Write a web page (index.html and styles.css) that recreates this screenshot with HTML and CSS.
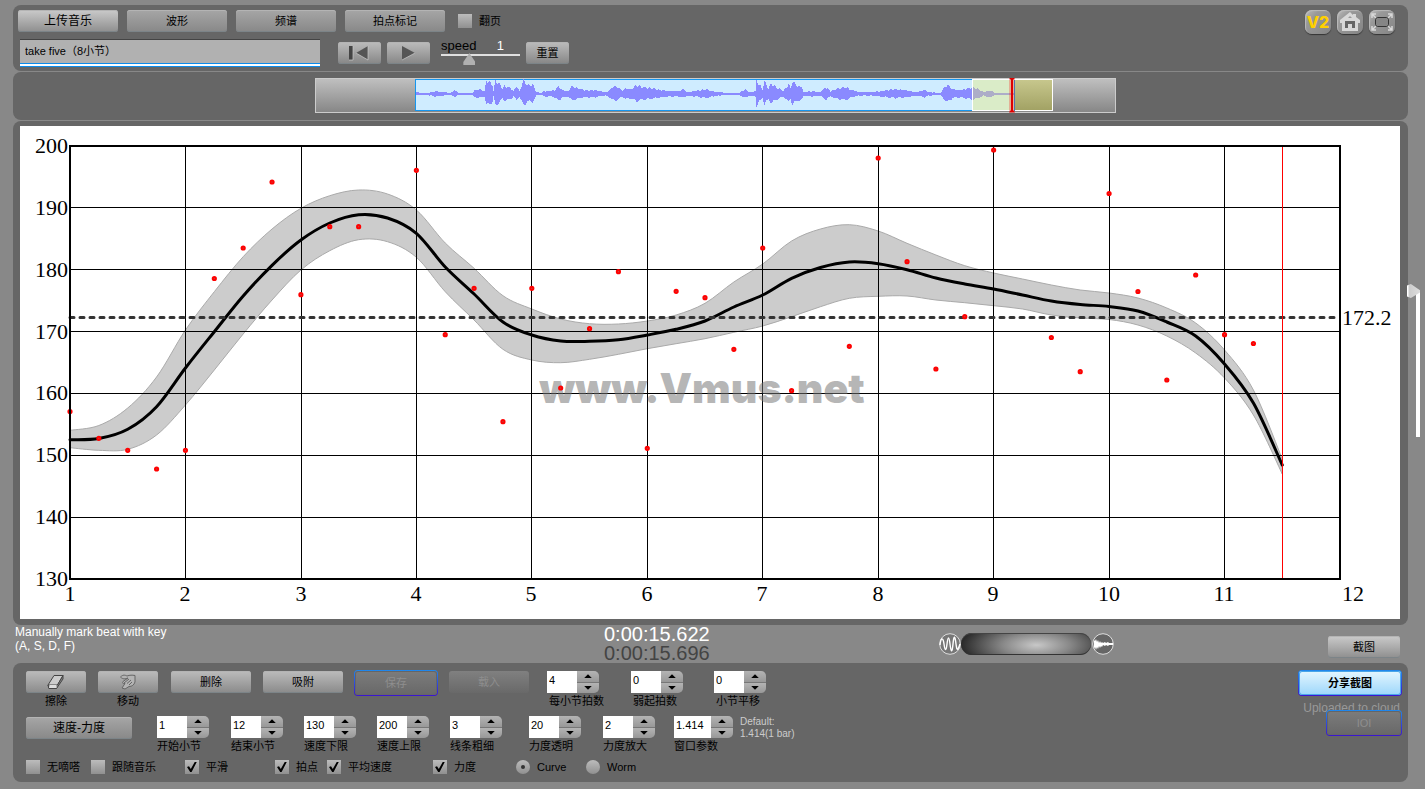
FILE: index.html
```html
<!DOCTYPE html>
<html lang="zh-CN">
<head>
<meta charset="utf-8">
<title>Vmus.net</title>
<link rel="stylesheet" href="styles.css">
</head>
<body>
<header class="panel header">
  <div class="header-main">
    <nav class="tabs">
      <button class="btn wide large bright">上传音乐</button>
      <button class="btn wide">波形</button>
      <button class="btn wide">频谱</button>
      <button class="btn wide">拍点标记</button>
      <label class="check"><input type="checkbox">翻页</label>
    </nav>
    <div class="transport">
      <input class="track-name" type="text" value="take five（8小节）" aria-label="Track">
      <div class="transport-buttons">
        <button class="btn play" aria-label="Rewind"><svg width="24" height="16" viewBox="0 0 24 16"><path d="M1 1h4v14h-4z" fill="#444"/><path d="M20 1v14L8 8z" fill="#555"/><path d="M5 1v14H1M20 1v14L8 8" fill="none" stroke="#ccc" stroke-width=".7"/></svg></button>
        <button class="btn play" aria-label="Play"><svg width="24" height="16" viewBox="0 0 24 16"><path d="M5 1v14l13-7z" fill="#555"/><path d="M5 15l13-7" stroke="#ccc" stroke-width=".7"/></svg></button>
      </div>
      <div class="speed">
        <div class="speed-head"><label for="speed">speed</label><output for="speed">1</output></div>
        <input id="speed" class="speed-range" type="range" min="0" max="3" step="0.1" value="1">
      </div>
      <button class="btn play">重置</button>
    </div>
  </div>
  <div class="header-icons">
    <button class="icon-btn v2">V2</button>
    <button class="icon-btn" aria-label="Home"><svg width="26" height="24" viewBox="0 0 26 24"><path d="M13 2L3 10v3h2v8h16v-8h2v-3l-4-3V4h-3v1z" fill="#d8d8d8"/><path d="M8 11h10v7h-3v-4h-4v4H8z" fill="#666"/><path d="M11 8l2-2 2 2z" fill="#999"/></svg></button>
    <button class="icon-btn" aria-label="Fullscreen"><svg width="26" height="24" viewBox="0 0 26 24"><rect x="6.500" y="7.500" width="13" height="9" rx="2" fill="#858585" stroke="#333"/><path d="M3 8V4h4M3 4l4 4M19 4h4v4M23 4l-4 4M3 16v4h4M3 20l4-4M19 20h4v-4M23 20l-4-4" fill="none" stroke="#d8d8d8" stroke-width="1.500"/></svg></button>
  </div>
</header>

<section class="panel overview">
  <svg class="overview-strip" viewBox="315 78 801 35" aria-label="Waveform">
    <defs>
      <linearGradient id="strip" x2="0" y2="1"><stop stop-color="#c0c0c0"/><stop offset="1" stop-color="#868686"/></linearGradient>
      <linearGradient id="olive" x2="0" y2="1"><stop stop-color="#c8c88e"/><stop offset="1" stop-color="#a1a163"/></linearGradient>
    </defs>
    <rect x="315.500" y="78.500" width="800" height="34" fill="url(#strip)" stroke="#ccc"/>
    <rect x="415.500" y="79.500" width="599" height="31" fill="#cfecff" stroke="#1796ee"/>
    <path id="wave" fill="#8a8aff"/>
    <rect x="973" y="80" width="41" height="30" fill="#eeee60" fill-opacity=".35"/>
    <rect x="1014" y="79" width="38" height="32" fill="url(#olive)"/>
    <rect x="972.500" y="79.500" width="80" height="31" fill="none" stroke="#fff"/>
    <path d="M1014.500 80v31" stroke="#1796ee"/>
    <path d="M1012 79v33" stroke="#f00" stroke-opacity=".25" stroke-width="6"/>
    <path d="M1012 78v34" stroke="#d00" stroke-width="2"/>
    <path d="M1009 78h6l-3 3zM1009 112.500h6l-3-4z" fill="#d00"/>
  </svg>
</section>

<section class="panel chart-panel">
  <svg class="chart" id="chart" viewBox="20 126 1380 493" role="img" aria-label="速度-力度">
    <path id="band" class="band"/>
    <g id="grid"></g>
    <path id="curve" class="curve"/>
    <path class="average" d="M70 317.500H1340"/>
    <text class="watermark" x="702" y="403" text-anchor="middle">www.Vmus.net</text>
    <g id="beats"></g>
    <path class="cursor" d="M1282.500 146V579"/>
    <rect class="frame" x="70" y="146" width="1270" height="433"/>
    <g id="labels"></g>
  </svg>
  <input class="zoom-range" type="range" value="0" aria-label="Zoom">
</section>

<section class="status">
  <p class="hint">Manually mark beat with key<br>(A, S, D, F)</p>
  <div class="clock"><div>0:00:15.622</div><div class="total">0:00:15.696</div></div>
  <div class="mixer">
    <svg width="22" height="22" viewBox="0 0 22 22"><circle cx="11" cy="11" r="10.300" fill="#777" stroke="#ddd"/><path d="M1 12C2 4 4 4 5 11s2 8 3 0 2-8 3 0 2 10 3 0 2-8 3 0 2 6 4 0" fill="none" stroke="#fff" stroke-width="1.400"/></svg>
    <div class="mixer-bar"></div>
    <svg class="mixer-wave" width="22" height="22" viewBox="0 0 22 22"><circle cx="11" cy="11" r="10.300" fill="#666" stroke="#ddd"/><path d="M2 7l1 1 1-2 1 3 1-2 1 3 1-2 1 2 1-1 1 1 2-1 1 1 2-1 1 1 4 0v2l-4 0-1 1-2-1-1 1-2-1-1 2-1-1-1 2-1-2-1 3-1-2-1 3-1-3-1 2z" fill="#fff"/></svg>
  </div>
  <button class="btn bright">截图</button>
</section>

<section class="panel controls">
  <div class="control-rows">
    <div class="row tools">
      <div class="tool"><button class="btn" id="erase" aria-label="擦除"><svg width="18" height="16" viewBox="0 0 18 16"><path d="M1 11L7 1.500h9L10.500 11l-1 3.500H2z" fill="#ccc" stroke="#444"/><path d="M1 11h9.500L16 1.500v3.500L9.500 14.500H2z" fill="#888" stroke="#444"/><path d="M2 14l.5-3h7l0 3z" fill="#ddd"/></svg></button><span>擦除</span></div>
      <div class="tool"><button class="btn" aria-label="移动"><svg width="18" height="16" viewBox="0 0 18 16"><path d="M1.500 3C4 .5 6 1 8 2c3-1 5-1 8-.5v6.500c-1 3-3 4.500-6 4.500l-4 2.500-3-1 3-4.500c-2 .5-3-.5-2-2L9 4C6 5 4 5.500 1.500 3z" fill="#b4b4b4" stroke="#666"/><path d="M5 9l5-4M8 9.500l4-3.500M10 11l3-3" fill="none" stroke="#666"/></svg></button><span>移动</span></div>
      <button class="btn medium">删除</button>
      <button class="btn medium">吸附</button>
      <button class="btn outlined faded save" disabled>保存</button>
      <button class="btn medium faded" disabled>载入</button>
      <div class="field" data-value="4">每小节拍数</div>
      <div class="field" data-value="0">弱起拍数</div>
      <div class="field" data-value="0">小节平移</div>
    </div>
    <div class="row params">
      <button class="btn large mode">速度-力度</button>
      <div class="field" data-value="1">开始小节</div>
      <div class="field" data-value="12">结束小节</div>
      <div class="field" data-value="130">速度下限</div>
      <div class="field" data-value="200">速度上限</div>
      <div class="field" data-value="3">线条粗细</div>
      <div class="field" data-value="20">力度透明</div>
      <div class="field" data-value="2">力度放大</div>
      <div class="field long" data-value="1.414">窗口参数</div>
      <p class="default">Default:<br>1.414(1 bar)</p>
    </div>
    <div class="row options">
      <label class="check"><input type="checkbox">无嘀嗒</label>
      <label class="check"><input type="checkbox">跟随音乐</label>
      <label class="check"><input type="checkbox" checked>平滑</label>
      <label class="check"><input type="checkbox" checked>拍点</label>
      <label class="check"><input type="checkbox" checked>平均速度</label>
      <label class="check"><input type="checkbox" checked>力度</label>
      <label class="check"><input type="radio" name="plot" checked>Curve</label>
      <label class="check"><input type="radio" name="plot">Worm</label>
    </div>
  </div>
  <div class="share">
    <button class="btn outlined primary">分享截图</button>
    <p class="uploaded">Uploaded to cloud</p>
    <button class="btn outlined faded ioi" disabled>IOI</button>
  </div>
</section>
<script src="app.js"></script>
</body>
</html>
```
FILE: styles.css
```css
* { box-sizing: border-box; }
body {
  margin: 0;
  padding: 5px 17px 7px 13px;
  background: #888;
  color: #000;
  font: 11px/13px "Liberation Sans", "Noto Sans CJK SC", sans-serif;
}
p { margin: 0; }
button, input { font: inherit; color: inherit; margin: 0; }

.panel { background: #666; border-radius: 8px; margin-bottom: 1px; }

.btn {
  display: inline-flex;
  align-items: center;
  justify-content: center;
  height: 22px;
  padding: 0;
  border: 0;
  border-radius: 3px;
  background: linear-gradient(#a6a6a6, #888);
  box-shadow: inset 0 1px #b4b4b4, inset 0 -1px #7c8488;
}
.btn.bright { background: linear-gradient(#cacaca, #8e8e8e); }
.btn.large { font-size: 12px; }
.btn.wide { width: 100px; }
.btn.medium { width: 80px; background: linear-gradient(#bcbcbc, #8a8a8a); }
.btn.play { width: 43px; background: linear-gradient(#bcbcbc, #868686); }
.btn.faded { color: #8e8e8e; background: linear-gradient(#808080, #696969); box-shadow: none; }
.btn.outlined {
  height: 26px;
  border: 1px solid transparent;
  border-radius: 4px;
  background: linear-gradient(#7c7c7c, #686868) padding-box, linear-gradient(#2089ec, #3c14d0) border-box;
  box-shadow: inset 0 0 0 1px #666;
}
.btn.primary {
  width: 104px;
  font-weight: bold;
  color: #000;
  background: linear-gradient(#e4f6ff, #9dd7fb) padding-box, linear-gradient(#2089ec, #3c14d0) border-box;
  box-shadow: inset 0 0 0 1px #4aa5e8;
}

.check { display: flex; align-items: center; gap: 7px; height: 14px; white-space: nowrap; }
.check input {
  appearance: none;
  flex: none;
  display: grid;
  place-items: center;
  width: 14px;
  height: 14px;
  background: linear-gradient(#bcbcbc, #909090);
}
.check input[type="radio"] { border-radius: 50%; }
.check input[type="checkbox"]:checked::before {
  content: "";
  width: 10px;
  height: 11px;
  background: #000;
  clip-path: polygon(0 50%, 20% 44%, 38% 68%, 80% 0, 100% 0, 46% 96%, 32% 96%);
}
.check input[type="radio"]:checked::before { content: ""; width: 4px; height: 4px; border-radius: 50%; background: #333; }

.header { display: flex; justify-content: space-between; height: 66px; padding: 5px 13px 4px 5px; }
.tabs { display: flex; gap: 9px; }
.tabs .check { margin: 4px 0 0 4px; }
.transport { display: flex; margin: 7px 0 0 2px; }
.track-name {
  width: 300px;
  height: 28px;
  padding: 0 5px 8px;
  border: 0;
  border-top: 1px solid #444;
  background: linear-gradient(#0d8ceb 1px, #fff 1px 3px, #0d8ceb 3px) bottom / 100% 4px no-repeat, #b1b1b1;
}
.transport-buttons { display: flex; gap: 6px; margin: 0 11px 0 18px; }
.transport .btn { margin-top: 3px; }
.speed { width: 79px; margin-right: 6px; }
.speed-head { display: flex; justify-content: space-between; padding-right: 16px; font-size: 13px; line-height: 14px; }
.speed-head output { color: #fff; }
.speed-range {
  appearance: none;
  display: block;
  width: 79px;
  height: 12px;
  background: linear-gradient(#e0e0e0, #e0e0e0) 0 1px / 100% 2px no-repeat;
}
.speed-range::-webkit-slider-thumb {
  appearance: none;
  width: 12px;
  height: 12px;
  background: #b0b0b0;
  clip-path: polygon(50% 0, 100% 75%, 100% 100%, 0 100%, 0 75%);
}
.header-icons { display: flex; gap: 6px; }
.icon-btn {
  display: grid;
  place-items: center;
  width: 26px;
  height: 24px;
  padding: 0;
  border: 0;
  border-radius: 7px;
  background: linear-gradient(135deg, #bbb, #999 30%, #858585);
  box-shadow: 0 1px 1px #333, inset 1px 1px 1px #bbb;
}
.icon-btn.v2 { color: #ffd000; font: 800 16px "Inter", sans-serif; }

.overview { display: flex; justify-content: center; padding: 6px 0 7px 10px; }
.overview-strip { display: block; width: 801px; max-width: 80%; }

.chart-panel { position: relative; padding: 5px 8px 6px 7px; margin-bottom: 0; }
.chart { display: block; width: 100%; background: #fff; }
.chart text { font: 22px "Liberation Serif", serif; }
.chart .watermark { font: 900 41px "Inter", sans-serif; fill: #777; fill-opacity: .55; }
.band { fill: #ccc; stroke: #aaa; }
.curve { fill: none; stroke: #000; stroke-width: 3; stroke-linecap: round; }
.grid-line { stroke: #000; shape-rendering: crispEdges; }
.frame { fill: none; stroke: #000; stroke-width: 2; }
.average { stroke: #333; stroke-width: 3; stroke-dasharray: 4 6; stroke-linecap: round; }
.cursor { stroke: #f00; }
.beat { fill: #a55; stroke: #f00; stroke-width: 2; }
.zoom-range {
  appearance: none;
  position: absolute;
  top: 163px;
  right: -12px;
  width: 13px;
  height: 153px;
  margin: 0;
  writing-mode: vertical-lr;
  background: linear-gradient(#fff, #fff) right bottom / 4px 146px no-repeat;
}
.zoom-range::-webkit-slider-thumb {
  appearance: none;
  width: 13px;
  height: 14px;
  background: linear-gradient(90deg, #fff 1px, #ccc 2px, #ddd);
  clip-path: polygon(0 10%, 30% 0, 100% 45%, 100% 60%, 30% 100%, 0 90%);
}

.status {
  display: grid;
  grid-template-columns: 591fr 335fr 389fr 72px;
  align-items: center;
  height: 38px;
  padding-right: 8px;
}
.status .btn { margin-top: 6px; }
.hint { align-self: start; padding-left: 2px; color: #fff; font-size: 12px; line-height: 14px; }
.clock { color: #fff; font-size: 20px; line-height: 19px; }
.clock .total { color: #444; }
.mixer { display: flex; align-items: center; }
.mixer-bar {
  width: 130px;
  height: 22px;
  border-radius: 11px;
  background: radial-gradient(ellipse 75px 26px at 58% 55%, #c8c8c8, #888 45%, #2a2a2a);
  box-shadow: inset 0 -1px #333, inset 0 1px #444;
}
.mixer-wave { margin-left: 1px; }

.controls { display: flex; justify-content: space-between; margin: 0; padding: 8px 6px 8px 13px; }
.row { display: grid; align-items: start; }
.tools { grid-template-columns: 72px 73px 92px 91px 95px 98px 84px 83px 60px; height: 45px; }
.params { grid-template-columns: 131px 74px 73px 73px 73px 79px 74px 71px 66px 80px; height: 44px; }
.options { grid-template-columns: 65px 94px 90px 52px 106px 83px 70px 60px; height: 14px; }
.tool { display: flex; flex-direction: column; align-items: center; gap: 2px; width: 60px; }
.tool .btn { width: 60px; background: linear-gradient(#bcbcbc, #8a8a8a); }
.btn.save { width: 84px; margin-top: -1px; }
.btn.mode { width: 106px; margin-top: 1px; }
.field { white-space: nowrap; }
.field label { display: block; margin-top: 2px; }
.tools .field label { padding-left: 2px; }
.stepper { display: flex; width: 52px; height: 22px; }
.long .stepper { width: 59px; }
.stepper input { flex: 1; min-width: 0; height: 22px; padding: 0 2px 5px; border: 0; background: #fff; }
.stepper-buttons { display: grid; grid-template-rows: 1fr 1fr; gap: 1px; width: 22px; border-radius: 0 5px 5px 0; overflow: hidden; background: #777; }
.stepper-buttons button { display: grid; place-items: center; padding: 0; border: 0; background: linear-gradient(#b4b4b4, #989898); }
.stepper-buttons button::before { content: ""; width: 8px; height: 4px; background: #000; clip-path: polygon(50% 0, 100% 100%, 0 100%); }
.stepper-buttons button + button::before { clip-path: polygon(0 0, 100% 0, 50% 100%); }
.default { color: #ccc; font-size: 10px; line-height: 12px; }
.share { display: flex; flex-direction: column; align-items: flex-end; }
.share .primary { margin-top: -1px; }
.uploaded { margin-top: 5px; padding-right: 2px; color: #999; font-size: 12px; line-height: 14px; }
.btn.ioi { width: 76px; margin-top: -5px; }
```
FILE: app.js
```js
const NS = "http://www.w3.org/2000/svg";
const $ = id => document.getElementById(id);
const LEFT = 70, TOP = 146, BOTTOM = 579, BAR = 1270 / 11, BEAT = BAR / 4;

function add(parent, tag, attrs, text) {
  const el = document.createElementNS(NS, tag);
  for (const key in attrs) el.setAttribute(key, attrs[key]);
  if (text !== undefined) el.textContent = text;
  parent.appendChild(el);
}

function smooth(points) {
  let d = "";
  for (let i = 0; i < points.length - 1; i++) {
    const p0 = points[Math.max(i - 1, 0)], p1 = points[i], p2 = points[i + 1];
    const p3 = points[Math.min(i + 2, points.length - 1)];
    d += `C${p1[0] + (p2[0] - p0[0]) / 6} ${p1[1] + (p2[1] - p0[1]) / 6} ${p2[0] - (p3[0] - p1[0]) / 6} ${p2[1] - (p3[1] - p1[1]) / 6} ${p2[0]} ${p2[1]}`;
  }
  return d;
}

const place = ys => ys.map((y, i) => [LEFT + i * BEAT, y]);

const curve = place([439.7, 438.5, 429.3, 406.7, 368, 331.7, 296, 265.3, 240, 223, 214.7, 218, 233.3, 267, 294, 322, 335, 341, 341.3, 339.7, 335, 329.3, 321, 307, 295, 278.3, 267.5, 262, 263.7, 269.7, 278, 284, 289, 295, 301, 304.5, 306.5, 311, 322, 336, 364, 403, 465]);
const upper = place([430.3, 425.5, 408, 377, 330, 291.7, 256.7, 229, 208.3, 195.7, 190, 194, 210, 243, 268.3, 295.7, 309, 319, 323.7, 324, 321, 315, 303.3, 282, 264, 241, 229, 224.7, 231, 243.3, 255, 265.7, 273, 279, 285, 290, 293, 298, 308, 323, 350, 390, 459]);
const lower = place([447.7, 450.3, 449.3, 435, 405, 370, 334, 300, 270, 250.7, 239.7, 241.7, 257.3, 291.7, 320, 349.3, 360, 362.7, 359.3, 354.3, 348.7, 343.7, 338.7, 332.3, 326, 316.7, 306.7, 298.3, 296.3, 296, 300, 302.7, 305.7, 309, 315, 318, 319.5, 325, 336, 353, 378, 415, 474]);
const beats = [411.5, 438.3, 450.3, 469, 450.3, 278.5, 248, 182, 294.7, 226.7, 226.7, null, 170.3, 334.7, 288.3, 421.7, 288.3, 388, 328.7, 271.7, 448.3, 291.3, 297.7, 349.3, 248, 390.7, null, 346.3, 158, 261.7, 369, 316.7, 150, null, 337.5, 371.7, 193.5, 291.5, 380, 275, 334.7, 343.5];

$("curve").setAttribute("d", `M${curve[0]}` + smooth(curve));
const back = lower.slice().reverse();
$("band").setAttribute("d", `M${upper[0]}` + smooth(upper) + `L${back[0]}` + smooth(back) + "Z");

beats.forEach((y, i) => {
  if (y !== null) add($("beats"), "circle", { class: "beat", cx: LEFT + i * BEAT, cy: y, r: 1.6 });
});

for (let bar = 1; bar <= 12; bar++) {
  const x = Math.round(LEFT + (bar - 1) * BAR - 0.4);
  if (bar > 1 && bar < 12) add($("grid"), "path", { class: "grid-line", d: `M${x + 0.5} ${TOP}V${BOTTOM}` });
  add($("labels"), "text", { x: bar === 12 ? x + 13 : x, y: 601, "text-anchor": "middle" }, bar);
}
for (let tempo = 130; tempo <= 200; tempo += 10) {
  const y = BOTTOM - (tempo - 130) * (BOTTOM - TOP) / 70;
  if (tempo > 130 && tempo < 200) add($("grid"), "path", { class: "grid-line", d: `M${LEFT} ${Math.floor(y) + 0.5}H1340` });
  add($("labels"), "text", { x: 68, y: Math.round(y) + 7, "text-anchor": "end" }, tempo);
}
add($("labels"), "text", { x: 1342, y: 325 }, "172.2");

const envelope = [415,2,425,1,435,3,443,2,450,1,454,4,458,1,472,1,474,4,480,5,484,3,486,14,492,10,493,3,495,14,499,10,502,6,504,8,509,7,513,3,516,8,519,3,523,14,527,9,532,10,536,2,541,1,543,3,550,3,554,4,558,8,562,4,568,3,571,8,577,6,584,4,595,4,605,2,608,3,613,8,618,7,622,3,625,6,630,5,636,9,642,7,650,6,660,4,670,3,680,3,682,5,687,2,700,4,706,5,712,3,725,1,738,1,745,5,749,2,755,3,756,14,760,8,762,5,764,13,768,6,771,11,776,7,783,3,788,10,790,6,792,13,797,8,801,8,803,2,812,3,820,2,825,7,830,3,838,6,845,7,852,4,858,2,870,2,880,3,895,5,905,4,915,2,924,4,928,2,940,1,943,6,947,10,952,5,958,4,965,5,972,7,978,5,983,2,990,4,995,1,1014,1];
let wave = "";
for (let x = 416, k = 0; x < 1014; x++) {
  while (envelope[k + 2] <= x) k += 2;
  const t = (x - envelope[k]) / (envelope[k + 2] - envelope[k]);
  const size = envelope[k + 1] + t * (envelope[k + 3] - envelope[k + 1]);
  const up = Math.max(1, Math.round(size * (0.95 + 0.12 * Math.sin(x * 1.3))));
  const down = Math.max(1, Math.round(size * (0.8 + 0.12 * Math.sin(x * 0.9))));
  wave += `M${x} ${94 - up}h1V${94 + down}h-1z`;
}
$("wave").setAttribute("d", wave);

document.querySelectorAll(".field").forEach((field, i) => {
  const name = field.textContent;
  field.innerHTML = `<div class="stepper"><input type="text" id="field${i}" value="${field.dataset.value}"><div class="stepper-buttons"><button aria-label="${name} +"></button><button aria-label="${name} -"></button></div></div><label for="field${i}">${name}</label>`;
});
```
